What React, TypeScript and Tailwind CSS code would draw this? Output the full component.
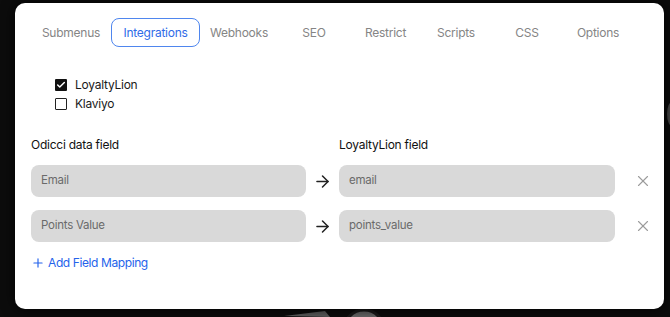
import React from "react";
import { ArrowRight, Check, Plus, X } from "lucide-react";

const tabs = [
  { label: "Submenus", w: "w-[80px]" },
  { label: "Integrations", w: "w-[89px]", active: true },
  { label: "Webhooks", w: "w-[78px]" },
  { label: "SEO", w: "w-[72px]" },
  { label: "Restrict", w: "w-[71px]" },
  { label: "Scripts", w: "w-[70px]" },
  { label: "CSS", w: "w-[72px]" },
  { label: "Options", w: "w-[70px]" },
];

const integrations = [
  { name: "LoyaltyLion", checked: true },
  { name: "Klaviyo", checked: false },
];

const mappings = [
  { from: "Email", to: "email" },
  { from: "Points Value", to: "points_value" },
];

const Checkbox = ({ checked }: { checked: boolean }) =>
  checked ? (
    <span className="flex items-center justify-center w-[12px] h-[12px] bg-[#111] rounded-[1px]">
      <Check size={10} strokeWidth={3.5} className="text-white" />
    </span>
  ) : (
    <span className="block w-[12px] h-[12px] border-[1.5px] border-[#222] rounded-[1px]" />
  );

export default function App() {
  return (
    <div className="relative w-[670px] h-[317px] bg-[#0c0c0c] overflow-hidden font-['Inter',sans-serif] tracking-[-0.25px]">
      {/* background art peeking out behind the modal */}
      <svg className="absolute left-0 top-0" width="670" height="317">
        <path d="M284 316 L325 311 L330 317 Z" fill="#5e5e5e" />
        <circle cx="364" cy="330" r="20" fill="#6a6a6a" stroke="#1a1a1a" strokeWidth="3" />
        <ellipse cx="672" cy="114" rx="5" ry="12" fill="#4a4a4a" />
      </svg>

      <div className="relative pl-[15px] pt-[3px]">
        <div className="w-[649px] h-[306px] bg-white rounded-[10px] shadow-[0_0_14px_rgba(0,0,0,0.9)] pl-[16px] pt-[15px]">
          <div className="flex">
            {tabs.map((t) => (
              <div
                key={t.label}
                className={`${t.w} h-[29px] flex items-center justify-center text-[12px] rounded-[8px] ${
                  t.active ? "border border-[#4f86ee] text-[#2f6be8]" : "text-[#858585]"
                }`}
              >
                {t.label}
              </div>
            ))}
          </div>

          <div className="mt-[28px] ml-[24px] flex flex-col">
            {integrations.map((i) => (
              <label key={i.name} className="h-[19px] flex items-center gap-[8px] text-[12px] text-[#1a1a1a]">
                <Checkbox checked={i.checked} />
                {i.name}
              </label>
            ))}
          </div>

          <div className="mt-[23px] flex text-[12px] leading-[18px] text-[#111]">
            <span className="w-[308px]">Odicci data field</span>
            <span>LoyaltyLion field</span>
          </div>

          <div className="mt-[11px] flex flex-col gap-[13px]">
            {mappings.map((m) => (
              <div key={m.from} className="flex items-center">
                <div className="w-[275px] shrink-0 h-[32px] rounded-[8px] bg-[#d9d9d9] px-[10px] flex items-center text-[11.5px] text-[#6a6a6a]">
                  {m.from}
                </div>
                <div className="w-[33px] shrink-0 flex justify-center">
                  <ArrowRight size={19} strokeWidth={1.9} className="text-[#222]" />
                </div>
                <div className="w-[276px] shrink-0 h-[32px] rounded-[8px] bg-[#d9d9d9] px-[10px] flex items-center text-[11.5px] text-[#6a6a6a]">
                  {m.to}
                </div>
                <div className="ml-[11px] w-[33px] shrink-0 flex justify-center">
                  <X size={18} strokeWidth={1.5} className="text-[#9c9c9c]" />
                </div>
              </div>
            ))}
          </div>

          <button className="mt-[12px] flex items-center gap-[3px] text-[12px] leading-[18px] tracking-[-0.4px] text-[#2563eb]">
            <Plus size={14} strokeWidth={2} />
            Add Field Mapping
          </button>
        </div>
      </div>
    </div>
  );
}
